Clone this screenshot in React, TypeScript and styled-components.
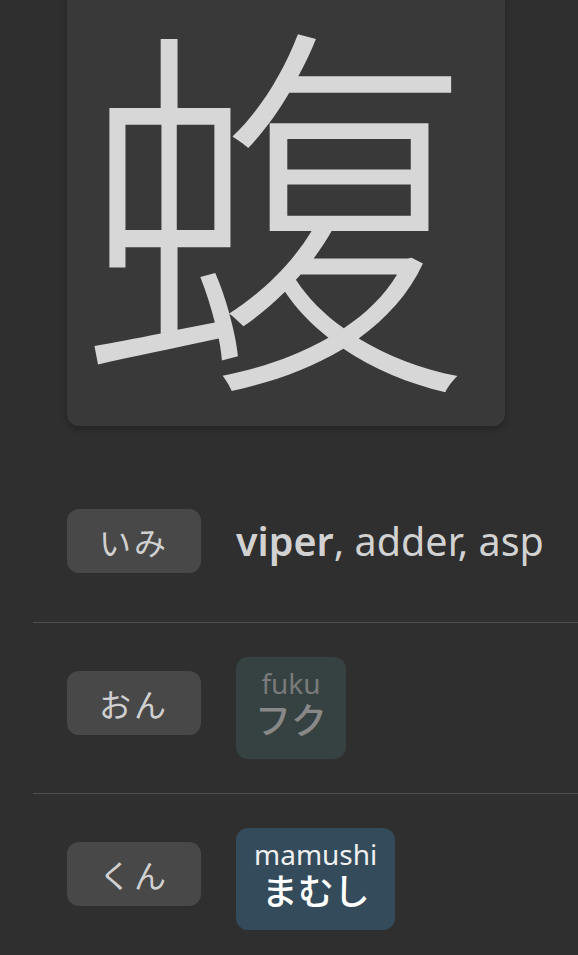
import React from 'react';
import styled, { createGlobalStyle } from 'styled-components';

const GlobalStyle = createGlobalStyle`
	html, body {
		margin: 0;
		padding: 0;
		background: #2f2f2f;
		overflow: hidden;
	}
	body {
		font-family: 'Noto Sans', 'Noto Sans CJK JP', sans-serif;
	}
`;

const Page = styled.div`
	width: 578px;
	height: 955px;
	overflow: hidden;
	background: #2f2f2f;
`;

const KanjiCard = styled.div`
	width: 438px;
	height: 438px;
	margin: -12px 0 35px 67px;
	border-radius: 12px;
	background: #393939;
	box-shadow: 0 3px 6px rgba(0, 0, 0, 0.25);
	display: flex;
	align-items: center;
	justify-content: center;
	.glyph {
		font-family: 'Noto Sans CJK JP', sans-serif;
		font-weight: 300;
		font-size: 392px;
		line-height: 1;
		color: #d7d7d7;
		margin: -32px 24px 0 0;
	}
`;

const Rows = styled.div`
	padding-left: 33px;
`;

const Row = styled.div<{ $min?: number }>`
	display: flex;
	align-items: flex-start;
	gap: 35px;
	padding: 34px 0 34px 34px;
	min-height: ${(p) => p.$min || 102}px;
	border-bottom: 1px solid #4f4f4f;
	&:last-child {
		border-bottom: none;
	}
`;

const Label = styled.div`
	width: 134px;
	height: 64px;
	margin-top: 14px;
	flex-shrink: 0;
	border-radius: 12px;
	background: #484848;
	color: #d0d0d0;
	font-family: 'Noto Sans CJK JP', sans-serif;
	font-weight: 400;
	font-size: 32px;
	display: flex;
	align-items: center;
	justify-content: center;
	letter-spacing: 3px;
`;

const Gloss = styled.div`
	font-size: 39.5px;
	line-height: 93px;
	color: #d2d2d2;
	white-space: nowrap;
	b {
		font-weight: 600;
	}
`;

const Reading = styled.div<{ $dim?: boolean }>`
	height: 102px;
	padding: 0 18px 10px;
	min-width: 110px;
	box-sizing: border-box;
	border-radius: 12px;
	background: ${(p) => (p.$dim ? '#364141' : '#334b5b')};
	display: flex;
	flex-direction: column;
	align-items: center;
	justify-content: center;
	.roma {
		font-size: 28px;
		line-height: 30px;
		color: ${(p) => (p.$dim ? '#7a7a7a' : '#f0f0f0')};
	}
	.kana {
		font-family: 'Noto Sans CJK JP', sans-serif;
		font-weight: 500;
		font-size: 36px;
		line-height: 40px;
		color: ${(p) => (p.$dim ? '#888888' : '#ffffff')};
	}
`;

export default function App() {
	return (
		<Page>
			<GlobalStyle />
			<KanjiCard>
				<span className='glyph'>蝮</span>
			</KanjiCard>
			<Rows>
				<Row $min={93}>
					<Label>いみ</Label>
					<Gloss>
						<b>viper</b>, adder, asp
					</Gloss>
				</Row>
				<Row>
					<Label>おん</Label>
					<Reading $dim>
						<span className='roma'>fuku</span>
						<span className='kana'>フク</span>
					</Reading>
				</Row>
				<Row>
					<Label>くん</Label>
					<Reading>
						<span className='roma'>mamushi</span>
						<span className='kana'>まむし</span>
					</Reading>
				</Row>
			</Rows>
		</Page>
	);
}
